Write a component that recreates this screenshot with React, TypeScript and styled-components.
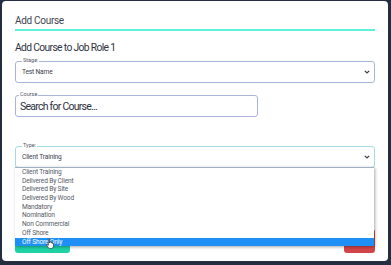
import { createGlobalStyle, styled } from "styled-components";

const Global = createGlobalStyle`
  html, body { margin: 0; padding: 0; }
  body {
    background: #242e41;
    font-family: Roboto, "Liberation Sans", sans-serif;
  }
`;

const Page = styled.div`
  box-sizing: border-box;
  width: 391px;
  height: 265px;
  padding: 1px 3px 4px 2px;
  background: #242e41;
`;

const Modal = styled.div`
  box-sizing: border-box;
  height: 260px;
  background: #fff;
  border-radius: 4px;
  padding: 13px 13px 0 13px;
  overflow: hidden;
`;

const Title = styled.div`
  font-size: 10px;
  line-height: 13px;
  letter-spacing: -0.3px;
  color: #40444f;
`;

const Rule = styled.div`
  height: 2px;
  margin-top: 2px;
  background: #5ef2d9;
`;

const Subtitle = styled.div`
  margin-top: 9px;
  font-size: 10.3px;
  line-height: 15px;
  letter-spacing: -0.65px;
  color: #2f3342;
`;

const Box = styled.div<{ $w?: number; $mt: number; $focus?: boolean }>`
  position: relative;
  box-sizing: border-box;
  width: ${(p) => (p.$w ? `${p.$w}px` : "100%")};
  height: 22px;
  margin-top: ${(p) => p.$mt}px;
  border: 1px solid ${(p) => (p.$focus ? "#a6dbe6" : "#a9b5d6")};
  border-radius: 3px;
  display: flex;
  align-items: center;
  padding: 0 4px 0 6px;
`;

const Label = styled.span<{ $left?: number }>`
  position: absolute;
  top: -5px;
  left: ${(p) => p.$left ?? 6}px;
  padding: 0 1px;
  background: #fff;
  font-size: 5.5px;
  line-height: 7px;
  color: #555a66;
`;

const Value = styled.span`
  flex: 1;
  font-size: 6.6px;
  letter-spacing: -0.15px;
  color: #3a3e4a;
`;

const Search = styled.span`
  flex: 1;
  font-size: 10.5px;
  letter-spacing: -0.75px;
  color: #2c3040;
  margin-left: -2px;
`;

const Chevron = () => (
  <svg width="6" height="4" viewBox="0 0 6 4">
    <path d="M0.8 0.8 L3 3 L5.2 0.8" fill="none" stroke="#3b3f4d" strokeWidth="1.2" />
  </svg>
);

const TypeWrap = styled.div`
  position: relative;
`;

const List = styled.ul`
  position: absolute;
  z-index: 2;
  left: 0;
  right: 1px;
  top: 21px;
  margin: 0;
  padding: 0;
  list-style: none;
  background: #fff;
  border-top: 1px solid #9fb0c0;
  box-shadow: 1px 1px 3px rgba(0, 0, 0, 0.35);
`;

const Item = styled.li<{ $active?: boolean }>`
  height: 8.7px;
  line-height: 8.7px;
  padding-left: 7px;
  font-size: 6.6px;
  letter-spacing: -0.15px;
  color: ${(p) => (p.$active ? "#fff" : "#555a66")};
  background: ${(p) => (p.$active ? "#1e8ff5" : "transparent")};
  white-space: nowrap;
  position: relative;
`;

const Buttons = styled.div`
  margin-top: 61px;
  display: flex;
  justify-content: space-between;
`;

const Button = styled.div<{ $color: string; $w: number }>`
  width: ${(p) => p.$w}px;
  height: 24px;
  border-radius: 3px;
  background: ${(p) => p.$color};
`;

const Cursor = styled.svg`
  position: absolute;
  left: 31px;
  top: 0px;
`;

const options = [
  "Client Training",
  "Delivered By Client",
  "Delivered By Site",
  "Delivered By Wood",
  "Mandatory",
  "Nomination",
  "Non Commercial",
  "Off Shore",
  "Off Shore Only",
];

export default function App() {
  return (
    <Page>
      <Global />
      <Modal>
        <Title>Add Course</Title>
        <Rule />
        <Subtitle>Add Course to Job Role 1</Subtitle>
        <Box $mt={6}>
          <Label>Stage:</Label>
          <Value>Test Name</Value>
          <Chevron />
        </Box>
        <Box $mt={12} $w={243}>
          <Label $left={3}>Course</Label>
          <Search>Search for Course...</Search>
        </Box>
        <TypeWrap>
          <Box $mt={29} $focus>
            <Label>Type:</Label>
            <Value>Client Training</Value>
            <Chevron />
          </Box>
          <List>
            {options.map((o, i) => (
              <Item key={o} $active={i === options.length - 1}>
                {o}
                {i === options.length - 1 && (
                  <Cursor width="9" height="11" viewBox="0 0 8 10">
                    <path
                      d="M2 1 C2 0.4 3 0.4 3 1 L3 4.5 L3.2 3.6 C3.4 3 4.3 3 4.3 3.7 L4.4 4.4 C4.6 3.8 5.5 3.8 5.5 4.5 L5.6 5 C5.8 4.5 6.7 4.6 6.7 5.3 L6.7 7.3 C6.7 8.6 5.9 9.5 4.6 9.5 L3.6 9.5 C2.6 9.5 2.1 8.9 1.6 8.1 L0.5 6.3 C0.2 5.8 0.9 5.3 1.4 5.8 L2 6.6 Z"
                      fill="#fff"
                      stroke="#222"
                      strokeWidth="0.6"
                    />
                  </Cursor>
                )}
              </Item>
            ))}
          </List>
        </TypeWrap>
        <Buttons>
          <Button $color="#1fd3a6" $w={55} />
          <Button $color="#d24548" $w={31} />
        </Buttons>
      </Modal>
    </Page>
  );
}
